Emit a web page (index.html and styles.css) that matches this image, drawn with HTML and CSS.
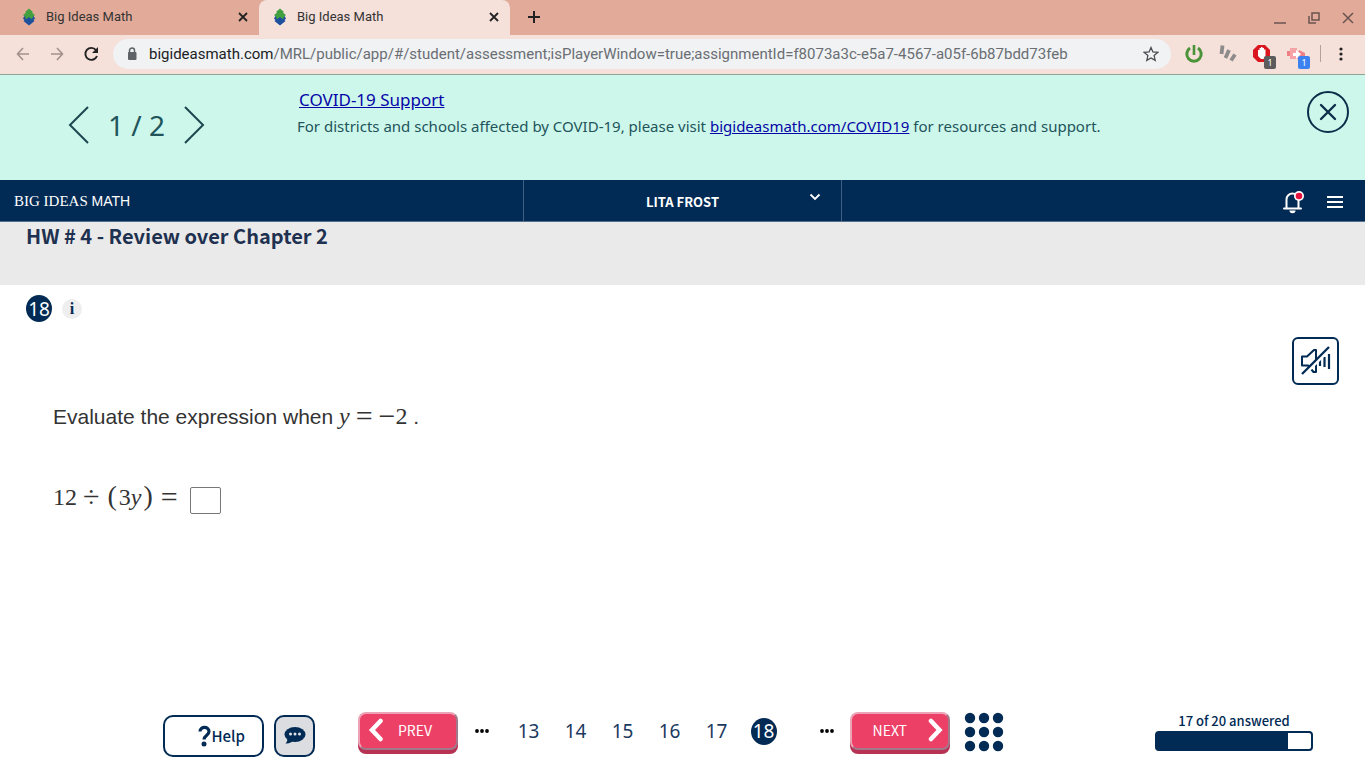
FILE: index.html
```html
<!DOCTYPE html>
<html lang="en">

<head>
    <meta charset="UTF-8">
    <meta name="viewport" content="width=device-width, initial-scale=1.0">
    <title>Big Ideas Math</title>
    <link rel="stylesheet" href="styles.css">
</head>

<body>
    <div class="tabs">
        <div class="tab">
            <svg class="favicon" width="14" height="18" viewBox="0 0 14 18">
                <path d="M7 17.500L1.500 13 2.500 12 1 10.500 2.500 8h9l1.500 2.500-1.500 1.500 1 1z" fill="#1c4f9c" />
                <path d="M7 .5L11 4l-1 .8L13 7l-2.500 2 .5 1-1.500 1L7 9l-2.500 2L3 10l.5-1L1 7l3-2.200L3 4z" fill="#43a03f" />
            </svg>
            <span class="tab-title">Big Ideas Math</span>
            <button class="tab-close" aria-label="Close tab">
                <svg width="10" height="10" viewBox="0 0 10 10"><path d="M1 1l8 8M9 1L1 9" stroke="#222" stroke-width="1.800" /></svg>
            </button>
        </div>
        <div class="tab active">
            <svg class="favicon" width="14" height="18" viewBox="0 0 14 18">
                <path d="M7 17.500L1.500 13 2.500 12 1 10.500 2.500 8h9l1.500 2.500-1.500 1.500 1 1z" fill="#1c4f9c" />
                <path d="M7 .5L11 4l-1 .8L13 7l-2.500 2 .5 1-1.500 1L7 9l-2.500 2L3 10l.5-1L1 7l3-2.200L3 4z" fill="#43a03f" />
            </svg>
            <span class="tab-title">Big Ideas Math</span>
            <button class="tab-close" aria-label="Close tab">
                <svg width="10" height="10" viewBox="0 0 10 10"><path d="M1 1l8 8M9 1L1 9" stroke="#222" stroke-width="1.800" /></svg>
            </button>
        </div>
        <button class="new-tab" aria-label="New tab">
            <svg width="14" height="14" viewBox="0 0 14 14"><path d="M7 1v12M1 7h12" stroke="#222" stroke-width="2" /></svg>
        </button>
        <div class="window-buttons">
            <button aria-label="Minimize"><svg width="14" height="14" viewBox="0 0 14 14"><path d="M1 12h12" stroke="#6b5450" stroke-width="1.500" /></svg></button>
            <button aria-label="Restore"><svg width="14" height="14" viewBox="0 0 14 14"><path d="M5 2h7v7H5zM2 5v7h7" fill="none" stroke="#6b5450" stroke-width="1.500" /></svg></button>
            <button aria-label="Close window"><svg width="14" height="14" viewBox="0 0 14 14"><path d="M2 2l10 10M12 2L2 12" stroke="#6b5450" stroke-width="1.500" /></svg></button>
        </div>
    </div>

    <div class="toolbar">
        <button aria-label="Back"><svg width="14" height="14" viewBox="0 0 14 14"><path d="M13 7H2M7 1L1.500 7 7 13" fill="none" stroke="#a1918d" stroke-width="1.600" /></svg></button>
        <button aria-label="Forward"><svg width="14" height="14" viewBox="0 0 14 14"><path d="M1 7h11M7 1l5.500 6L7 13" fill="none" stroke="#a1918d" stroke-width="1.600" /></svg></button>
        <button aria-label="Reload"><svg width="16" height="16" viewBox="0 0 16 16"><path d="M13 10A6 6 0 1 1 12 4" fill="none" stroke="#222" stroke-width="1.900" /><path d="M14 1v6H8z" fill="#222" /></svg></button>
        <div class="address">
            <svg width="10" height="14" viewBox="0 0 10 14"><path d="M2.500 6V3.500a2.500 2.500 0 0 1 5 0V6" fill="none" stroke="#5f6368" stroke-width="1.500" /><rect x="1" y="5" width="8.500" height="8" rx="1" fill="#5f6368" /></svg>
            <span class="url"><span class="host">bigideasmath.com</span>/MRL/public/app/#/student/assessment;isPlayerWindow=true;assignmentId=f8073a3c-e5a7-4567-a05f-6b87bdd73feb</span>
            <button aria-label="Bookmark this page"><svg width="16" height="16" viewBox="0 0 16 16"><path d="M8 1.500l1.900 4.500 4.900.4-3.700 3.200 1.100 4.800L8 11.900l-4.200 2.500 1.100-4.800L1.200 6.400l4.900-.4z" fill="none" stroke="#4a4d51" stroke-width="1.300" /></svg></button>
        </div>
        <div class="extensions">
            <button aria-label="Power">
                <svg width="20" height="20" viewBox="0 0 20 20"><path d="M6 4a7.200 7.200 0 1 0 8 0" fill="none" stroke="#4b9338" stroke-width="3" /><path d="M10 1v10" stroke="#4b9338" stroke-width="2.600" /></svg>
            </button>
            <button aria-label="Notes">
                <svg width="20" height="20" viewBox="0 0 20 20"><path d="M4.500 1.500L3.500 10M11 6l-3.500 8M17 10.500L13 16.500" stroke="#8d8b8b" stroke-width="3.800" /></svg>
            </button>
            <button class="ext" aria-label="Content blocker">
                <svg width="20" height="20" viewBox="0 0 20 20"><path d="M6 1h7l5 5v7l-5 5H6l-5-5V6z" fill="#d9151f" /><path d="M6 12V6h1.500V4H9V3h1.500v1H12v1.500h1.500V12l-2 3H9z" fill="#fff" /></svg>
                <span class="count">1</span>
            </button>
            <button class="ext" aria-label="Recorder">
                <svg width="20" height="20" viewBox="0 0 20 20"><path d="M4 4h7v3h4v8H4z" fill="#f5a3a6" /><path d="M1 7h3v5H1zM13 6l6 3v3h-6z" fill="#ee7f86" /><path d="M7 9h3V6l5 4-5 5v-3H7z" fill="#fff" /></svg>
                <span class="count blue">1</span>
            </button>
            <span class="divider"></span>
            <button aria-label="Browser menu"><svg width="4" height="16" viewBox="0 0 4 16"><circle cx="2" cy="3" r="1.600" fill="#222" /><circle cx="2" cy="8" r="1.600" fill="#222" /><circle cx="2" cy="13" r="1.600" fill="#222" /></svg></button>
        </div>
    </div>

    <section class="banner">
        <div class="pager">
            <button aria-label="Previous notice"><svg width="22" height="40" viewBox="0 0 22 40"><path d="M20 2L2 20l18 18" fill="none" stroke="#1c4650" stroke-width="2" /></svg></button>
            <span>1 / 2</span>
            <button aria-label="Next notice"><svg width="22" height="40" viewBox="0 0 22 40"><path d="M2 2l18 18L2 38" fill="none" stroke="#1c4650" stroke-width="2" /></svg></button>
        </div>
        <div class="notice">
            <h2><a href="#">COVID-19 Support</a></h2>
            <p>For districts and schools affected by COVID-19, please visit <a href="#">bigideasmath.com/COVID19</a> for resources and support.</p>
        </div>
        <button class="banner-close" aria-label="Close notice">
            <svg width="42" height="42" viewBox="0 0 42 42"><circle cx="21" cy="21" r="20" fill="none" stroke="#0d2e4a" stroke-width="2" /><path d="M14 14l14 14M28 14L14 28" stroke="#0d2e4a" stroke-width="2.400" stroke-linecap="round" /></svg>
        </button>
    </section>

    <nav class="navbar">
        <a class="brand" href="#">BIG IDEAS <span>MATH</span></a>
        <button class="user">
            LITA FROST
            <svg width="12" height="12" viewBox="0 0 12 12"><path d="M1.500 3.500L6 8l4.500-4.500" fill="none" stroke="#fff" stroke-width="1.800" /></svg>
        </button>
        <div class="nav-icons">
            <button aria-label="Notifications">
                <svg width="22" height="24" viewBox="0 0 22 24"><path d="M2 18.500h17M4.500 18V9.500a6 6 0 0 1 12 0V18" fill="none" stroke="#fff" stroke-width="2" stroke-linejoin="round" stroke-linecap="round" /><path d="M7.500 20.500h6a3 2.800 0 0 1-6 0z" fill="#fff" /><circle cx="17" cy="6" r="5" fill="#fff" /><circle cx="17" cy="6" r="3.300" fill="#e4123c" /></svg>
            </button>
            <button aria-label="Menu">
                <svg width="18" height="14" viewBox="0 0 18 14"><path d="M1 2h16M1 7h16M1 12h16" stroke="#fff" stroke-width="1.800" /></svg>
            </button>
        </div>
    </nav>

    <header class="title-bar">
        <h1>HW # 4 - Review over Chapter 2</h1>
    </header>

    <main>
        <div class="question-head">
            <span class="number">18</span>
            <button class="info" aria-label="Question info">i</button>
        </div>
        <button class="sound" aria-label="Turn on sound">
            <svg width="32" height="32" viewBox="0 0 32 32" fill="none" stroke="#012a54" stroke-width="2"><path d="M2 20.500V11.500h5L14 5h2v22h-2.500L8 20.500z" stroke-linejoin="round" /><path d="M20 14v7M24.500 12v10M29 9v15" stroke-width="2.200" /><path d="M4 30L31 3" stroke="#fff" stroke-width="3" /><path d="M2 29L29 2" stroke-width="2.300" /></svg>
        </button>
        <p class="prompt">Evaluate the expression when <span class="math"><i>y</i> <span class="op">=</span> <span class="op">−</span>2</span> .</p>
        <div class="equation">
            <label class="math" for="answer">12 <span class="op">÷</span> <span class="paren">(</span>3<i>y</i><span class="paren">)</span> <span class="op">=</span></label>
            <input type="text" id="answer">
        </div>
    </main>

    <footer>
        <button class="help"><svg width="13" height="22" viewBox="0 0 13 22"><path d="M2 6.500C2 1 11 1 11 6.500c0 4-5 4-5 8" fill="none" stroke="#012a54" stroke-width="3.200" /><circle cx="6" cy="19" r="2.500" fill="#012a54" /></svg>Help</button>
        <button class="chat" aria-label="Chat">
            <svg width="22" height="20" viewBox="0 0 22 20"><ellipse cx="11" cy="8.500" rx="10.500" ry="7.500" fill="#012a54" /><path d="M3 11c1 3 0 5-1.500 6.500C5 18 8 16 9 15z" fill="#012a54" /><circle cx="6.500" cy="8" r="1.500" fill="#dfe3e8" /><circle cx="11" cy="8" r="1.500" fill="#dfe3e8" /><circle cx="15.500" cy="8" r="1.500" fill="#dfe3e8" /></svg>
        </button>
        <button class="step prev">
            <svg width="16" height="24" viewBox="0 0 16 24"><path d="M12.500 3L4 12l8.500 9" fill="none" stroke="#fff" stroke-width="4.500" stroke-linecap="round" /></svg>
            <span>PREV</span>
        </button>
        <div class="pages">
            <span class="more"><svg width="14" height="4" viewBox="0 0 14 4"><circle cx="2" cy="2" r="1.900" /><circle cx="7" cy="2" r="1.900" /><circle cx="12" cy="2" r="1.900" /></svg></span>
            <a href="#">13</a>
            <a href="#">14</a>
            <a href="#">15</a>
            <a href="#">16</a>
            <a href="#">17</a>
            <a href="#"><span class="number">18</span></a>
            <span class="more last"><svg width="14" height="4" viewBox="0 0 14 4"><circle cx="2" cy="2" r="1.900" /><circle cx="7" cy="2" r="1.900" /><circle cx="12" cy="2" r="1.900" /></svg></span>
        </div>
        <button class="step next">
            <span>NEXT</span>
            <svg width="16" height="24" viewBox="0 0 16 24"><path d="M4 3l8.500 9L4 21" fill="none" stroke="#fff" stroke-width="4.500" stroke-linecap="round" /></svg>
        </button>
        <button class="all-questions" aria-label="All questions">
            <svg width="40" height="40" viewBox="0 0 40 40" fill="#012a54"><circle cx="6" cy="6" r="5.200" /><circle cx="20" cy="6" r="5.200" /><circle cx="34" cy="6" r="5.200" /><circle cx="6" cy="20" r="5.200" /><circle cx="20" cy="20" r="5.200" /><circle cx="34" cy="20" r="5.200" /><circle cx="6" cy="34" r="5.200" /><circle cx="20" cy="34" r="5.200" /><circle cx="34" cy="34" r="5.200" /></svg>
        </button>
        <div class="progress">
            <span>17 of 20 answered</span>
            <div class="bar"><div class="fill" style="width: 85%"></div></div>
        </div>
    </footer>
</body>

</html>
```

FILE: styles.css
```css
* {
    box-sizing: border-box;
    margin: 0;
    padding: 0;
}

body {
    display: flex;
    flex-direction: column;
    min-height: 100vh;
    font-family: "Noto Sans", sans-serif;
    background: #fff;
    color: #012a54;
}

button {
    display: flex;
    align-items: center;
    justify-content: center;
    border: none;
    background: none;
    color: inherit;
    font: inherit;
    cursor: pointer;
}

svg {
    display: block;
    flex-shrink: 0;
}

/* Browser bar */
.tabs {
    display: flex;
    height: 35px;
    padding-left: 8px;
    background: #e2ab99;
    font-family: Roboto, sans-serif;
    font-size: 13px;
    color: #333;
}

.tab {
    display: flex;
    align-items: center;
    width: 251px;
    padding: 0 8px 2px 14px;
}

.tab.active {
    background: #f5e0da;
    border-radius: 8px 8px 0 0;
}

.tab-title {
    flex: 1;
    margin-left: 10px;
}

.tab-close {
    width: 16px;
    height: 16px;
}

.new-tab {
    width: 48px;
    padding-bottom: 2px;
}

.window-buttons {
    display: flex;
    gap: 20px;
    margin-left: auto;
    padding-right: 10px;
}

.toolbar {
    display: flex;
    align-items: center;
    gap: 20px;
    height: 40px;
    padding: 0 22px 2px 16px;
    background: #f5e0da;
    border-bottom: 1px solid #8ea596;
}

.address {
    display: flex;
    align-items: center;
    flex: 1;
    height: 30px;
    margin-left: -7px;
    padding: 0 12px 0 14px;
    border-radius: 15px;
    background: #f0f2f4;
    font-family: Roboto, sans-serif;
    font-size: 15px;
    color: #6a6e73;
}

.url {
    flex: 1;
    margin-left: 12px;
    white-space: nowrap;
}

.host {
    color: #202124;
}

.extensions {
    display: flex;
    align-items: center;
    gap: 14px;
    margin-left: -7px;
}

.ext {
    position: relative;
}

.count {
    position: absolute;
    right: -4px;
    bottom: -5px;
    width: 12px;
    border-radius: 2px;
    background: #5c5c5c;
    color: #fff;
    font-size: 9px;
    line-height: 13px;
}

.count.blue {
    background: #3b82f0;
}

.divider {
    width: 1px;
    height: 17px;
    margin-right: 4px;
    background: #b5a09a;
}

/* Notice */
.banner {
    display: flex;
    align-items: flex-start;
    height: 105px;
    padding: 16px 16px 0 68px;
    background: #cdf7ea;
    color: #22545c;
}

.pager {
    display: flex;
    align-items: center;
    gap: 18px;
    width: 229px;
    margin-top: 14px;
    font-size: 28px;
    line-height: 38px;
}

.notice {
    flex: 1;
    font-size: 15px;
    line-height: 20px;
}

.notice h2 {
    margin: -1px 0 6px 2px;
    font-size: 17px;
    font-weight: normal;
}

.notice a {
    color: #0505a8;
}

/* Navigation */
.navbar {
    display: grid;
    grid-template-columns: 523px 319px 1fr;
    height: 42px;
    background: #012a54;
    border-bottom: 1px solid #56708c;
    color: #fff;
}

.brand {
    align-self: center;
    padding: 2px 0 0 14px;
    font-family: "Liberation Serif", serif;
    font-size: 15px;
    color: #fff;
    text-decoration: none;
}

.brand span {
    font-family: "Liberation Sans", sans-serif;
    font-size: 14px;
}

.user {
    gap: 90px;
    padding: 2px 0 0 102px;
    border-left: 1px solid #406083;
    border-right: 1px solid #406083;
    font-family: "Noto Sans CJK SC", sans-serif;
    font-size: 13px;
    font-weight: bold;
    line-height: 20px;
}

.user svg {
    margin-bottom: 9px;
}

.nav-icons {
    display: flex;
    align-items: center;
    justify-content: flex-end;
    gap: 22px;
    padding: 2px 21px 0 0;
}

.title-bar {
    height: 63px;
    padding-left: 26px;
    background: #eaeaea;
    color: #1f3150;
}

.title-bar h1 {
    font-family: "Noto Sans CJK SC", sans-serif;
    font-size: 20px;
    line-height: 28px;
}

/* Question */
main {
    flex: 1;
    padding: 10px 26px 0;
}

.question-head {
    display: flex;
    align-items: center;
    gap: 10px;
}

.number {
    display: flex;
    align-items: center;
    justify-content: center;
    width: 26px;
    height: 27px;
    border-radius: 50%;
    background: #012a54;
    color: #fff;
    font-size: 19px;
}

.info {
    width: 20px;
    height: 20px;
    border-radius: 50%;
    background: #eee;
    font-family: "Liberation Serif", serif;
    font-size: 16px;
    font-weight: bold;
}

.sound {
    width: 47px;
    height: 48px;
    margin: 15px 0 0 auto;
    border: 2px solid #012a54;
    border-radius: 6px;
}

.prompt {
    margin: 15px 0 0 27px;
    font-family: "Liberation Sans", sans-serif;
    font-size: 21px;
    line-height: 32px;
    color: #333;
}

.math {
    font-family: "Liberation Serif", serif;
    font-size: 24px;
    line-height: 32px;
    color: #333;
}

/* wide signs, lowered to sit on the math axis */
.op {
    font-size: 30px;
    line-height: 24px;
    vertical-align: -2px;
}

.paren {
    margin: 0 2px;
    font-size: 28px;
    line-height: 24px;
}

.equation {
    display: flex;
    align-items: flex-start;
    gap: 12px;
    margin: 48px 0 0 27px;
}

.equation input {
    width: 31px;
    height: 27px;
    margin-top: 6px;
    border: 1px solid #777;
    border-radius: 2px;
    font-size: 18px;
    text-align: center;
}

/* Bottom bar */
footer {
    display: flex;
    align-items: flex-start;
    padding: 0 52px 11px 163px;
    font-family: "Noto Sans CJK SC", sans-serif;
    line-height: 20px;
}

.help,
.chat {
    height: 42px;
    margin: 4px 10px 0 0;
    border: 2px solid #012a54;
    border-radius: 10px;
    font-size: 15px;
    font-weight: 500;
}

.help {
    justify-content: flex-end;
    width: 101px;
    padding-right: 17px;
}

.chat {
    width: 41px;
    margin-right: 43px;
    background: #dcdde0;
}

.step {
    width: 100px;
    height: 38px;
    margin-top: 1px;
    padding-bottom: 2px;
    border: 2px solid;
    border-color: #eba3b5 #a2788b #a2788b #eba3b5;
    border-radius: 8px;
    background: #ec4067;
    box-shadow: 0 4px #b83254;
    color: #fff;
    font-size: 14px;
}

.prev {
    justify-content: flex-start;
    gap: 14px;
    padding-left: 8px;
}

.next {
    justify-content: flex-end;
    gap: 20px;
    padding-right: 5px;
}

.pages {
    display: flex;
    align-items: center;
    height: 40px;
    font-family: "Noto Sans", sans-serif;
    font-size: 19px;
}

.pages a,
.more {
    display: flex;
    justify-content: center;
    width: 47px;
    color: #1c3a5e;
    text-decoration: none;
}

.last {
    margin-left: 16px;
}

.all-questions {
    margin: 1px 0 0 14px;
}

.progress {
    width: 158px;
    margin-left: auto;
    font-size: 13px;
    font-weight: 500;
    text-align: center;
}

.progress span {
    display: block;
}

.bar {
    height: 20px;
    border: 2px solid #012a54;
    border-radius: 4px;
}

.fill {
    height: 100%;
    background: #012a54;
}
```
